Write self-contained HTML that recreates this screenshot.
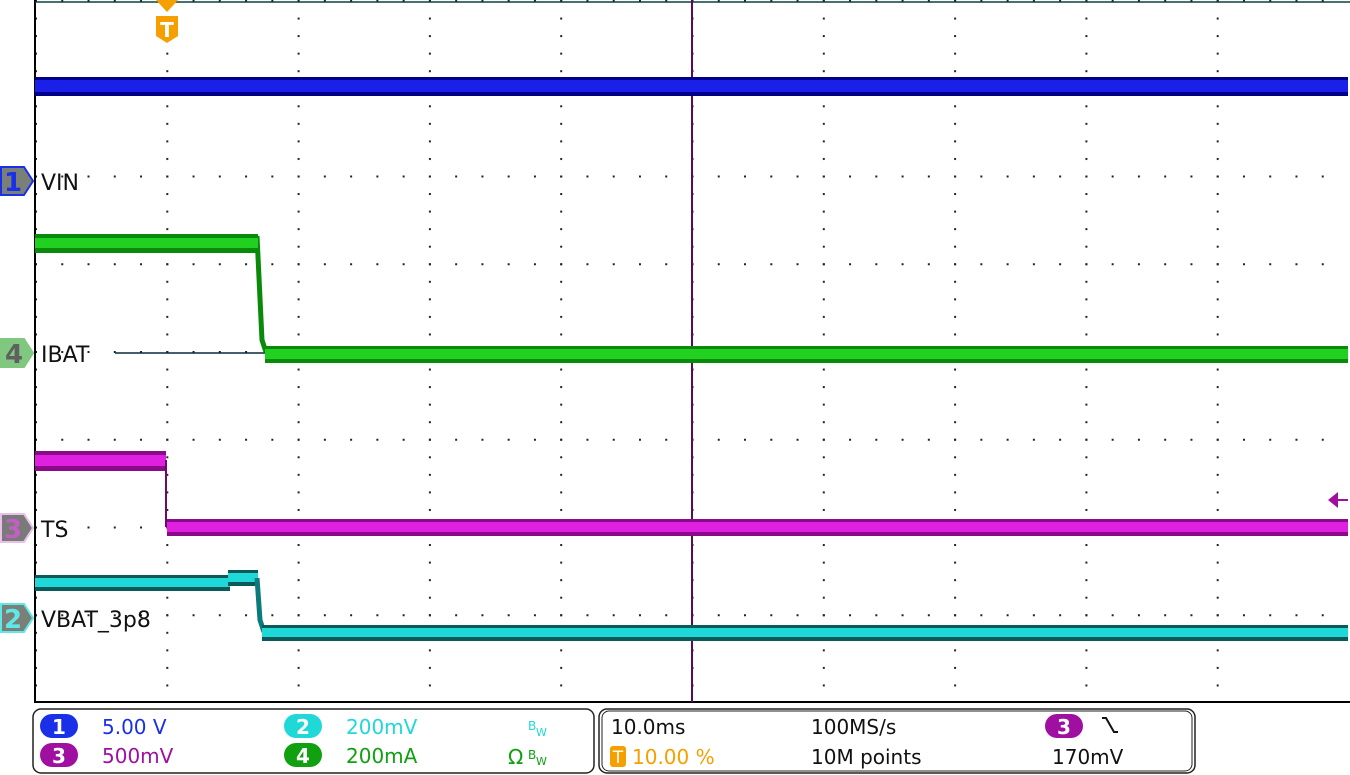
<!DOCTYPE html>
<html><head><style>
html,body{margin:0;padding:0;background:#fff;width:1350px;height:775px;overflow:hidden}
svg{display:block}
text{font-family:"DejaVu Sans","Liberation Sans",sans-serif}
</style></head><body>
<svg width="1350" height="775" viewBox="0 0 1350 775">
<defs>
<pattern id="pv" x="35" y="0" width="131.3" height="17.55" patternUnits="userSpaceOnUse"><rect x="0" y="0" width="2" height="2" fill="#222"/></pattern>
<pattern id="ph" x="35" y="0" width="26.26" height="87.75" patternUnits="userSpaceOnUse"><rect x="0" y="0" width="2" height="2" fill="#222"/></pattern>
</defs>
<rect x="35" y="0" width="1313" height="702" fill="url(#pv)"/>
<rect x="35" y="0" width="1313" height="702" fill="url(#ph)"/>
<line x1="35" y1="0" x2="35" y2="703" stroke="#000" stroke-width="2"/>
<line x1="35" y1="702" x2="1350" y2="702" stroke="#000" stroke-width="2"/>
<line x1="35" y1="2" x2="1350" y2="2" stroke="#0a4040" stroke-width="1.5"/>
<line x1="692" y1="0" x2="692" y2="702" stroke="#5a0a5a" stroke-width="2"/>
<polygon points="156,0 178,0 167,12" fill="#f5a000"/>
<path d="M156,16 h22 v20 l-11,7 l-11,-7 z" fill="#f5a000"/>
<text x="167" y="37" font-size="20" fill="#fff" text-anchor="middle" font-weight="bold">T</text>
<rect x="35" y="77" width="1313" height="19" fill="#00008a"/>
<rect x="35" y="80" width="1313" height="12" fill="#1a20e8"/>
<line x1="115" y1="353" x2="265" y2="353" stroke="#0a2a3a" stroke-width="1.5"/>
<path d="M257,236 L262,340 L266,352" stroke="#0a8a0a" stroke-width="5" fill="none"/>
<rect x="35" y="234" width="223" height="19" fill="#0a8a0a"/>
<rect x="35" y="238" width="223" height="10" fill="#22d022"/>
<rect x="265" y="346" width="1083" height="17" fill="#0a8a0a"/>
<rect x="265" y="349" width="1083" height="10" fill="#22d022"/>
<rect x="35" y="451" width="131" height="20" fill="#8a0a8a"/>
<rect x="35" y="455" width="131" height="11" fill="#e020e0"/>
<line x1="166" y1="460" x2="166" y2="527" stroke="#6a0a6a" stroke-width="2"/>
<rect x="167" y="519" width="1181" height="17" fill="#8a0a8a"/>
<rect x="167" y="522" width="1181" height="10" fill="#e020e0"/>
<polygon points="1328,500 1338,492 1338,508" fill="#a010a0"/>
<line x1="1336" y1="500" x2="1348" y2="500" stroke="#a010a0" stroke-width="2"/>
<rect x="35" y="575" width="195" height="16" fill="#0a5a5a"/>
<rect x="35" y="578" width="195" height="9" fill="#20d8d8"/>
<rect x="228" y="570" width="30" height="16" fill="#0a5a5a"/>
<rect x="228" y="573" width="30" height="9" fill="#20d8d8"/>
<path d="M257,578 L260,620 L264,632" stroke="#0a7a7a" stroke-width="5" fill="none"/>
<rect x="262" y="625" width="1086" height="16" fill="#0a5a5a"/>
<rect x="262" y="628" width="1086" height="9" fill="#20d8d8"/>
<g font-size="26" font-weight="bold">
<path d="M1,167 H24 L33,181 L24,195 H1 Z" fill="#7a8078" stroke="#1a30e8" stroke-width="2"/>
<text x="13" y="191" fill="#1a30e8" text-anchor="middle">1</text>
<path d="M1,339 H24 L33,353 L24,367 H1 Z" fill="#80c880" stroke="#80c880" stroke-width="2"/>
<text x="14" y="363" fill="#606060" text-anchor="middle">4</text>
<path d="M1,514 H24 L33,528 L24,542 H1 Z" fill="#7a7a7a" stroke="#e8c0e8" stroke-width="2"/>
<text x="13" y="538" fill="#c060c0" text-anchor="middle">3</text>
<path d="M1,604 H24 L33,618 L24,632 H1 Z" fill="#7a8078" stroke="#60e8e8" stroke-width="2"/>
<text x="13" y="628" fill="#60e8e8" text-anchor="middle">2</text>
</g>
<g font-size="22" fill="#111">
<text x="41" y="190">VIN</text>
<text x="41" y="362">IBAT</text>
<text x="41" y="537">TS</text>
<text x="41" y="627">VBAT_3p8</text>
</g>
<rect x="33" y="709" width="561" height="64" rx="8" fill="#fff" stroke="#222" stroke-width="1.5"/>
<rect x="599" y="709" width="596" height="64" rx="8" fill="#fff" stroke="#222" stroke-width="1.5"/>
<rect x="602" y="711" width="590" height="60" rx="7" fill="none" stroke="#222" stroke-width="1"/>
<g font-size="20">
<rect x="40" y="714" width="38" height="24" rx="12" fill="#1a30e8"/><text x="59" y="734" fill="#fff" text-anchor="middle" font-weight="bold">1</text>
<rect x="40" y="743" width="38" height="24" rx="12" fill="#a010a0"/><text x="59" y="763" fill="#fff" text-anchor="middle" font-weight="bold">3</text>
<rect x="284" y="714" width="38" height="24" rx="12" fill="#20d8d8"/><text x="303" y="734" fill="#fff" text-anchor="middle" font-weight="bold">2</text>
<rect x="284" y="743" width="38" height="24" rx="12" fill="#10a010"/><text x="303" y="763" fill="#fff" text-anchor="middle" font-weight="bold">4</text>
<text x="102" y="734" fill="#1a30e8">5.00 V</text>
<text x="102" y="763" fill="#a010a0">500mV</text>
<text x="346" y="734" fill="#20d8d8">200mV</text>
<text x="346" y="763" fill="#10a010">200mA</text>
<text x="528" y="730" fill="#20d8d8" font-size="12">B</text><text x="536" y="736" fill="#20d8d8" font-size="11">W</text>
<text x="508" y="764" fill="#10a010">Ω</text><text x="528" y="759" fill="#10a010" font-size="12">B</text><text x="536" y="765" fill="#10a010" font-size="11">W</text>
<text x="611" y="734" fill="#111">10.0ms</text>
<rect x="610" y="746" width="16" height="21" rx="3" fill="#f5a000"/><text x="618" y="763" fill="#fff" font-size="17" text-anchor="middle">T</text>
<text x="632" y="764" fill="#f5a000">10.00 %</text>
<text x="811" y="734" fill="#111">100MS/s</text>
<text x="811" y="764" fill="#111">10M points</text>
<rect x="1045" y="714" width="38" height="24" rx="12" fill="#a010a0"/><text x="1064" y="734" fill="#fff" text-anchor="middle" font-weight="bold">3</text>
<path d="M1102,718 h4 l8,14 h4" stroke="#111" stroke-width="2" fill="none"/>
<text x="1052" y="764" fill="#111">170mV</text>
</g>
</svg>
</body></html>
